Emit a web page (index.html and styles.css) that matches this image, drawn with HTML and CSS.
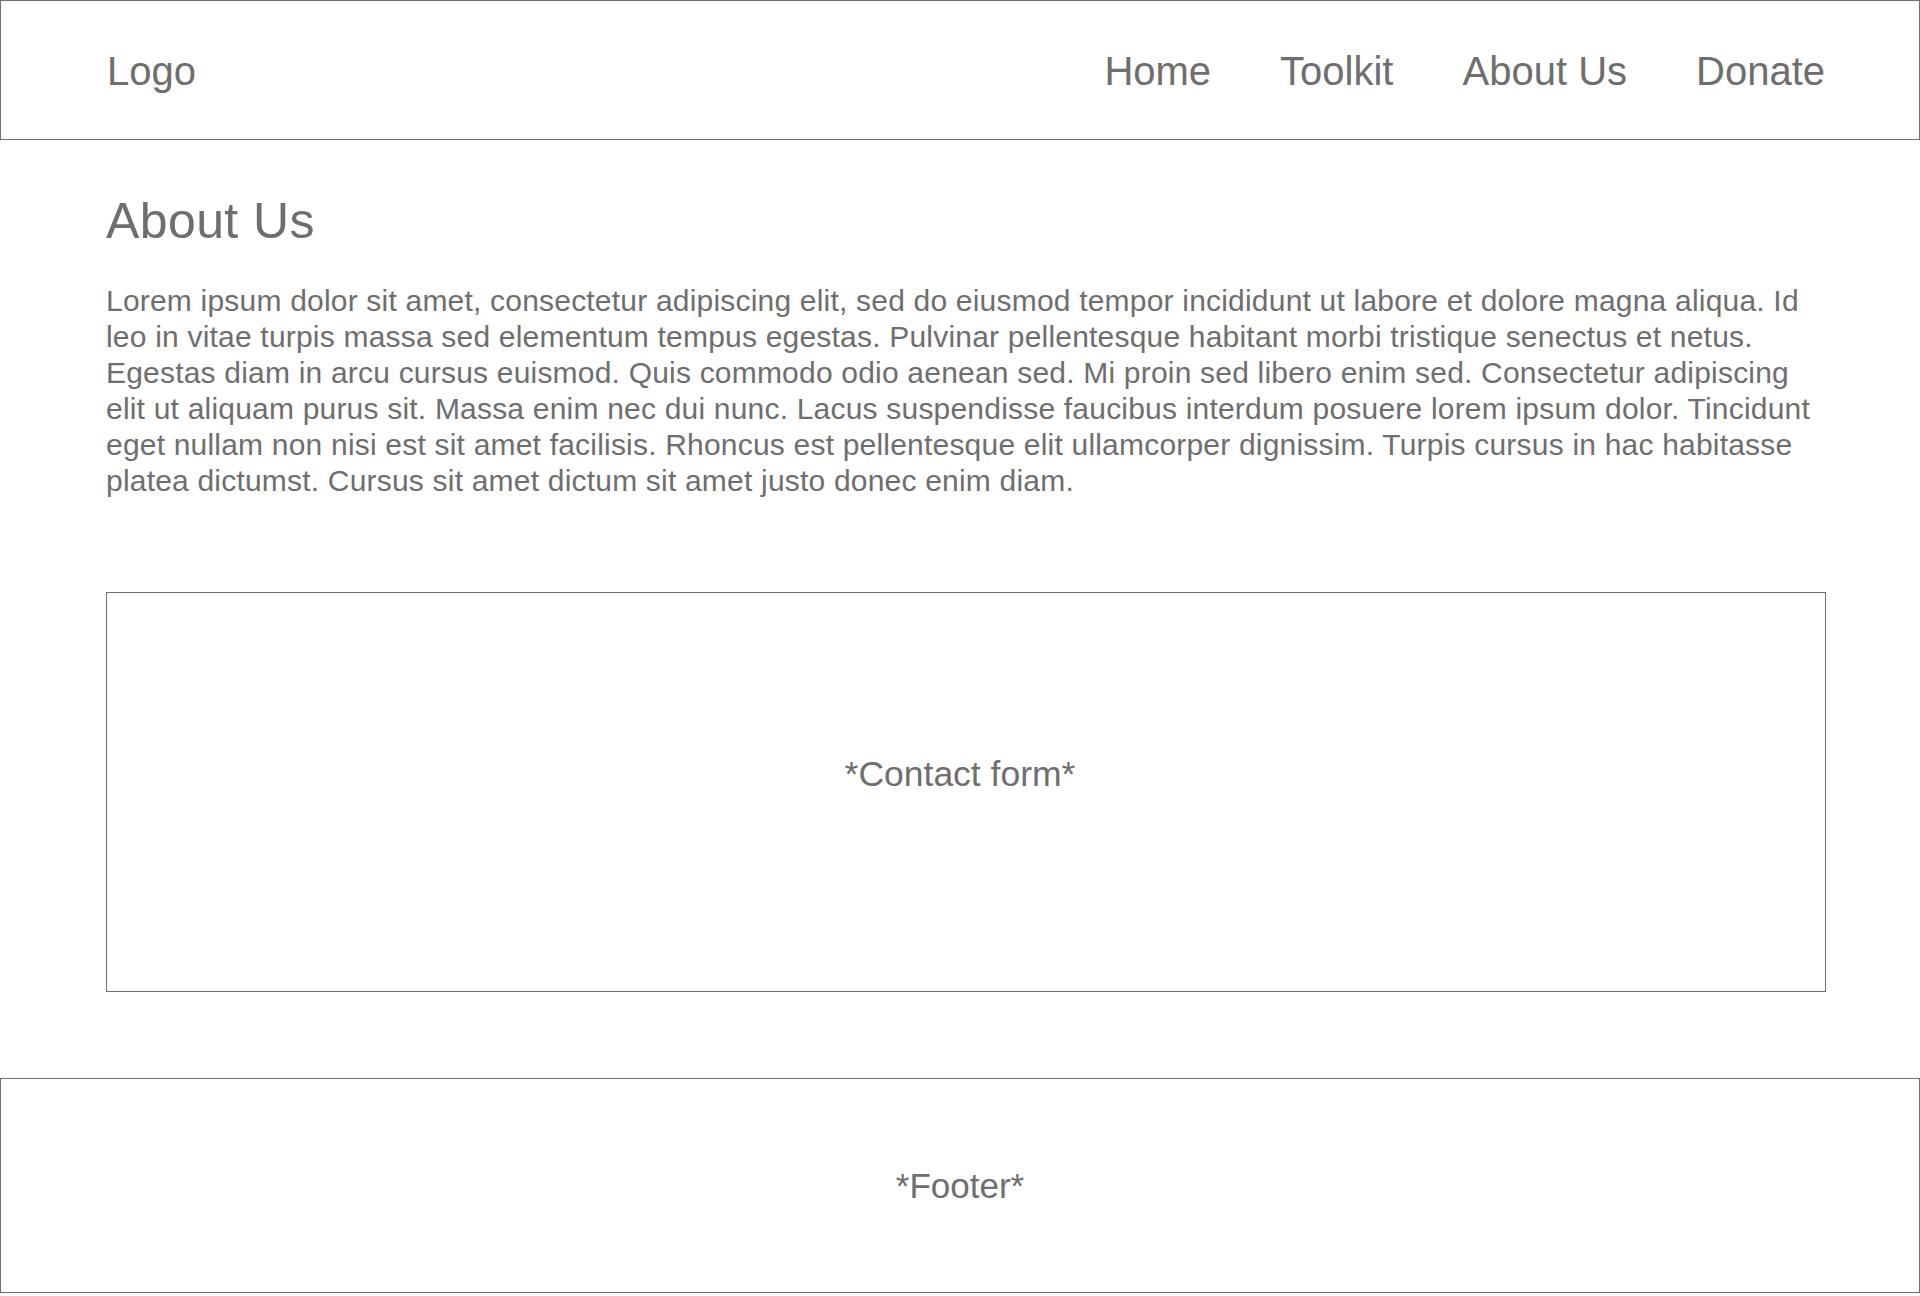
FILE: index.html
```html
<!DOCTYPE html>
<html lang="en">
<head>
<meta charset="utf-8">
<title>About Us</title>
<link rel="stylesheet" href="styles.css">
</head>
<body>
<header class="site-header">
  <div class="logo">Logo</div>
  <nav class="nav">
    <a class="nav-link" href="#">Home</a>
    <a class="nav-link" href="#">Toolkit</a>
    <a class="nav-link" href="#">About Us</a>
    <a class="nav-link" href="#">Donate</a>
  </nav>
</header>
<main class="content">
  <h1 class="page-title">About Us</h1>
  <p class="intro">Lorem ipsum dolor sit amet, consectetur adipiscing elit, sed do eiusmod tempor incididunt ut labore et dolore magna aliqua. Id leo in vitae turpis massa sed elementum tempus egestas. Pulvinar pellentesque habitant morbi tristique senectus et netus. Egestas diam in arcu cursus euismod. Quis commodo odio aenean sed. Mi proin sed libero enim sed. Consectetur adipiscing elit ut aliquam purus sit. Massa enim nec dui nunc. Lacus suspendisse faucibus interdum posuere lorem ipsum dolor. Tincidunt eget nullam non nisi est sit amet facilisis. Rhoncus est pellentesque elit ullamcorper dignissim. Turpis cursus in hac habitasse platea dictumst. Cursus sit amet dictum sit amet justo donec enim diam.</p>
  <section class="contact-box">
    <span class="placeholder">*Contact form*</span>
  </section>
</main>
<footer class="site-footer">
  <span class="placeholder footer-text">*Footer*</span>
</footer>
</body>
</html>
```

FILE: styles.css
```css
* {
  box-sizing: border-box;
}

html, body {
  margin: 0;
  padding: 0;
  background: #ffffff;
}

body {
  font-family: "Liberation Sans", Arial, Helvetica, sans-serif;
  color: #6e6e6e;
}

.site-header {
  height: 140px;
  border: 1px solid #707070;
  display: flex;
  align-items: center;
  justify-content: space-between;
  padding: 3px 94px 0 106px;
}

.logo {
  font-size: 40px;
}

.nav {
  display: flex;
  gap: 69px;
}

.nav-link {
  font-size: 40px;
  color: #6e6e6e;
  text-decoration: none;
}

.content {
  margin-left: 106px;
  width: 1720px;
  padding-top: 51px;
}

.page-title {
  margin: 0;
  font-size: 50px;
  font-weight: normal;
  line-height: 60px;
  letter-spacing: 0.4px;
}

.intro {
  margin: 32px 0 0;
  font-size: 30px;
  line-height: 36px;
  letter-spacing: 0.2px;
}

.contact-box {
  margin-top: 93px;
  height: 400px;
  border: 1px solid #707070;
  display: flex;
  align-items: center;
  justify-content: center;
  padding: 0 12px 35px 0;
}

.placeholder {
  font-size: 35.5px;
}

.footer-text {
  font-size: 35px;
}

.site-footer {
  margin-top: 86px;
  height: 215px;
  border: 1px solid #707070;
  display: flex;
  align-items: center;
  justify-content: center;
}
```
